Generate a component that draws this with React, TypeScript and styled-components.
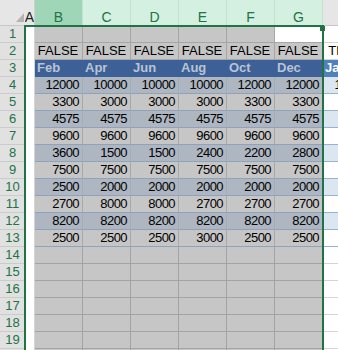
import React from "react";
import styled, { createGlobalStyle } from "styled-components";

const GlobalStyle = createGlobalStyle`
  html, body {
    margin: 0;
    padding: 0;
    overflow: hidden;
    background: #ffffff;
  }
  body {
    font-family: "Liberation Sans", Arial, sans-serif;
  }
`;

type RowKind = "blank" | "flag" | "head" | "band" | "plain" | "empty";
type Align = "left" | "center" | "right";

type Palette = { bg: string; fg: string; line: string; vline: string };

// colours of cells inside the selection (grey overlay)
const picked: Record<RowKind, Palette> = {
  blank: { bg: "#c6c6c6", fg: "#000", line: "#a6a6a6", vline: "#a6a6a6" },
  flag: { bg: "#c6c6c6", fg: "#000", line: "#a6a6a6", vline: "#a6a6a6" },
  head: { bg: "#3d6096", fg: "#b8c4d6", line: "#3d6096", vline: "#3d6096" },
  band: { bg: "#adb6c1", fg: "#000", line: "#8fa1bb", vline: "#a5adb8" },
  plain: { bg: "#c6c6c6", fg: "#000", line: "#8fa1bb", vline: "#a9a9a9" },
  empty: { bg: "#c6c6c6", fg: "#000", line: "#a3a3a3", vline: "#a3a3a3" },
};

// colours of the column outside the selection
const outside: Record<RowKind, Palette> = {
  blank: { bg: "#ffffff", fg: "#000", line: "#d4d4d4", vline: "#d4d4d4" },
  flag: { bg: "#ffffff", fg: "#000", line: "#d4d4d4", vline: "#d4d4d4" },
  head: { bg: "#4f81bd", fg: "#ffffff", line: "#4f81bd", vline: "#4f81bd" },
  band: { bg: "#dce6f1", fg: "#000", line: "#95b3d7", vline: "#dce6f1" },
  plain: { bg: "#ffffff", fg: "#000", line: "#95b3d7", vline: "#ffffff" },
  empty: { bg: "#ffffff", fg: "#000", line: "#d4d4d4", vline: "#d4d4d4" },
};

const alignFor = (kind: RowKind): Align =>
  kind === "head" ? "left" : kind === "flag" ? "center" : "right";

const rows: { kind: RowKind; cells: string[]; extra: string }[] = [
  { kind: "blank", cells: ["", "", "", "", "", ""], extra: "" },
  { kind: "flag", cells: ["FALSE", "FALSE", "FALSE", "FALSE", "FALSE", "FALSE"], extra: "TRUE" },
  { kind: "head", cells: ["Feb", "Apr", "Jun", "Aug", "Oct", "Dec"], extra: "Jan" },
  { kind: "band", cells: ["12000", "10000", "10000", "10000", "12000", "12000"], extra: "11000" },
  { kind: "plain", cells: ["3300", "3000", "3000", "3000", "3300", "3300"], extra: "" },
  { kind: "band", cells: ["4575", "4575", "4575", "4575", "4575", "4575"], extra: "" },
  { kind: "plain", cells: ["9600", "9600", "9600", "9600", "9600", "9600"], extra: "" },
  { kind: "band", cells: ["3600", "1500", "1500", "2400", "2200", "2800"], extra: "" },
  { kind: "plain", cells: ["7500", "7500", "7500", "7500", "7500", "7500"], extra: "" },
  { kind: "band", cells: ["2500", "2000", "2000", "2000", "2000", "2000"], extra: "" },
  { kind: "plain", cells: ["2700", "8000", "8000", "2700", "2700", "2700"], extra: "" },
  { kind: "band", cells: ["8200", "8200", "8200", "8200", "8200", "8200"], extra: "" },
  { kind: "plain", cells: ["2500", "2500", "2500", "3000", "2500", "2500"], extra: "" },
  ...Array.from({ length: 7 }, () => ({
    kind: "empty" as RowKind,
    cells: ["", "", "", "", "", ""],
    extra: "",
  })),
];

const letters = ["B", "C", "D", "E", "F", "G"];

export default function App() {
  return (
    <>
      <GlobalStyle />
      <Viewport>
        <Sheet>
          <Corner>
            <svg width="8" height="9" viewBox="0 0 8 9">
              <polygon points="8,0 8,9 0,9" fill="#b4b4b4" />
            </svg>
          </Corner>
          <ColHead $state="idle">A</ColHead>
          {letters.map((l, i) => (
            <ColHead key={l} $state={i === 0 ? "active" : "selected"}>
              {l}
            </ColHead>
          ))}
          <ColHead $state="idle" />

          {rows.map((row, r) => (
            <React.Fragment key={r}>
              <RowHead>{r + 1}</RowHead>
              <SpacerCell />
              {row.cells.map((value, c) => {
                const active = r === 0 && c === 5;
                const pal = active ? outside.blank : picked[row.kind];
                return (
                  <Cell
                    key={c}
                    $bg={pal.bg}
                    $fg={pal.fg}
                    $line={active ? picked.blank.line : pal.line}
                    $vline={active ? picked.blank.vline : pal.vline}
                    $align={alignFor(row.kind)}
                    $bold={row.kind === "head"}
                    $num={alignFor(row.kind) === "right"}
                  >
                    {value}
                  </Cell>
                );
              })}
              <Cell
                $bg={outside[row.kind].bg}
                $fg={outside[row.kind].fg}
                $line={outside[row.kind].line}
                $vline={outside[row.kind].vline}
                $align={alignFor(row.kind)}
                $bold={row.kind === "head"}
                $num={alignFor(row.kind) === "right"}
              >
                {row.extra}
              </Cell>
            </React.Fragment>
          ))}

          <SelectionFrame>
            <FillHandle />
          </SelectionFrame>
        </Sheet>
      </Viewport>
    </>
  );
}

const Viewport = styled.div`
  width: 338px;
  height: 350px;
  overflow: hidden;
`;

const Sheet = styled.div`
  position: relative;
  display: grid;
  grid-template-columns: 25px 10px repeat(6, 48px) 48px;
  grid-template-rows: 26px repeat(20, 17px);
  width: 371px;
  font-size: 13px;
`;

const Corner = styled.div`
  box-sizing: border-box;
  background: #e6e6e6;
  border-bottom: 1px solid #c6c6c6;
  display: flex;
  align-items: flex-end;
  justify-content: flex-end;
  padding: 0 1px 3px 0;
`;

const ColHead = styled.div<{ $state: "active" | "selected" | "idle" }>`
  box-sizing: border-box;
  background: ${(p) =>
    p.$state === "active" ? "#a0d6b8" : p.$state === "selected" ? "#d3f0e0" : "#e6e6e6"};
  color: ${(p) => (p.$state === "idle" ? "#222" : "#217346")};
  border-right: 1px solid ${(p) => (p.$state === "idle" ? "#d0d0d0" : "#c3e2d1")};
  border-bottom: 1px solid #c6c6c6;
  display: flex;
  justify-content: center;
  align-items: flex-start;
  padding-top: 10px;
  font-size: 14px;
  line-height: 15px;
  overflow: hidden;
  white-space: nowrap;
`;

const RowHead = styled.div`
  box-sizing: border-box;
  background: #e1e1e1;
  border-bottom: 1px solid #cbcbcb;
  color: #217346;
  display: flex;
  align-items: center;
  justify-content: center;
  line-height: 16px;
`;

const SpacerCell = styled.div`
  box-sizing: border-box;
  background: #ffffff;
  border-right: 1px solid #d4d4d4;
`;

const Cell = styled.div<{
  $bg: string;
  $fg: string;
  $line: string;
  $vline: string;
  $align: Align;
  $bold?: boolean;
  $num?: boolean;
}>`
  box-sizing: border-box;
  background: ${(p) => p.$bg};
  color: ${(p) => p.$fg};
  border-right: 1px solid ${(p) => p.$vline};
  border-bottom: 1px solid ${(p) => p.$line};
  font-weight: ${(p) => (p.$bold ? 700 : 400)};
  letter-spacing: ${(p) => (p.$num ? "-0.55px" : "0")};
  display: flex;
  align-items: center;
  justify-content: ${(p) =>
    p.$align === "left" ? "flex-start" : p.$align === "center" ? "center" : "flex-end"};
  padding: 0 3px 0 2px;
  line-height: 16px;
  white-space: nowrap;
  overflow: hidden;
`;

const SelectionFrame = styled.div`
  position: absolute;
  left: 24px;
  top: 25px;
  width: 300px;
  height: 400px;
  box-sizing: border-box;
  border: 2px solid #217346;
  border-bottom: none;
  pointer-events: none;
`;

const FillHandle = styled.div`
  position: absolute;
  right: -3px;
  top: -1px;
  width: 5px;
  height: 5px;
  background: #217346;
`;
